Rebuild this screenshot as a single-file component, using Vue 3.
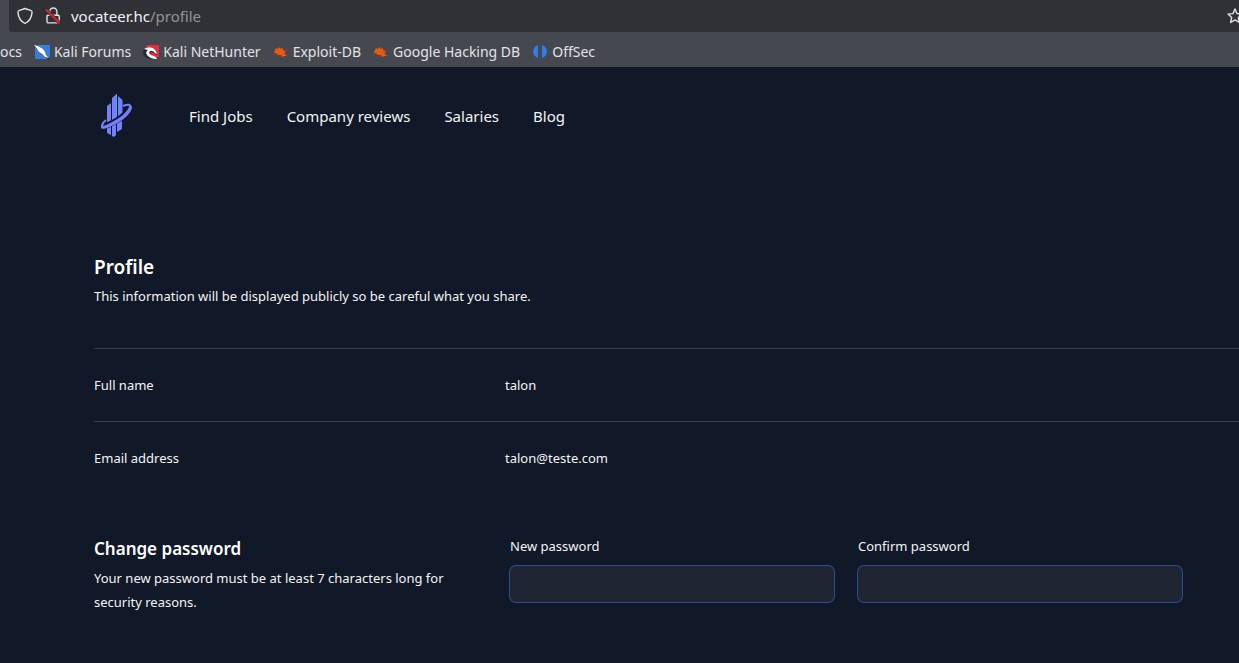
<script setup>
import { ref } from 'vue'

const links = ['Find Jobs', 'Company reviews', 'Salaries', 'Blog']
const bookmarks = [
  { name: 'Kali Forums', icon: 'forums' },
  { name: 'Kali NetHunter', icon: 'nethunter' },
  { name: 'Exploit-DB', icon: 'bug' },
  { name: 'Google Hacking DB', icon: 'bug' },
  { name: 'OffSec', icon: 'offsec' }
]
const details = [
  { label: 'Full name', value: 'talon' },
  { label: 'Email address', value: 'talon@teste.com' }
]
const newPassword = ref('')
const confirmPassword = ref('')
</script>

<template>
  <div class="window">
    <div class="toolbar">
      <div class="address">
        <svg class="shield" viewBox="0 0 16 18" width="16" height="18" fill="none" stroke="#e2e2e6" stroke-width="1.4" stroke-linejoin="round">
          <path d="M8 1.5 L14.2 3.7 Q15.2 4 15 5.6 C14.6 11 12.2 14.3 8 16.5 C3.8 14.3 1.4 11 1 5.6 Q.8 4 1.8 3.7 Z" />
        </svg>
        <svg class="lock" viewBox="0 0 16 18" width="16" height="18" fill="none">
          <path d="M4.7 8V4.6a3.6 3.6 0 0 1 7.2 0V8M3 8.2h10.2q1 0 1 1v5.2q0 1.5-1.5 1.5H3.5Q2 15.9 2 14.4V9.2q0-1 1-1Z" stroke="#e2e2e6" stroke-width="1.4" />
          <path d="M1 2.5 14.500 16" stroke="#303136" stroke-width="3.500" />
          <path d="M1 2.5 14.500 16" stroke="#ee2030" stroke-width="1.800" />
        </svg>
        <span class="url">vocateer.hc<span class="path">/profile</span></span>
      </div>
      <svg class="star" viewBox="0 0 16 16" width="16" height="16" fill="none" stroke="#e2e2e6" stroke-width="1.4" stroke-linejoin="round">
        <path d="M8 1 10 5.600 15 6.100 11.300 9.500 12.400 14.500 8 11.900 3.600 14.500 4.700 9.500 1 6.100 6 5.600Z" />
      </svg>
    </div>

    <nav class="bookmarks" aria-label="Bookmarks">
      <a href="#" class="bookmark">ocs</a>
      <a v-for="b in bookmarks" :key="b.name" href="#" class="bookmark">
        <svg v-if="b.icon === 'forums'" viewBox="0 0 16 16" width="16" height="16">
          <path d="M1 1h15v14H1Z" fill="#367be0" />
          <path d="M0 2 4 7 7 10 11 13 15 16 16 14 12 11 10 7 6 3 2 1Z" fill="#292c33" />
          <path d="M0 1 4 2 9 5 11 8 12 11 15 14 11 13 8 10 5 8 3 5Z" fill="#fff" />
        </svg>
        <svg v-else-if="b.icon === 'nethunter'" viewBox="0 0 16 16" width="16" height="16">
          <path d="M4 1h12v12H10L2 5Z" fill="#ed2940" />
          <path d="M0 8Q1 3 7 3 12 4 14 8L14 11 9 8 7 9 8 12 13 13 15 15H7Q2 14 0 10Z" fill="#292a30" />
          <path d="M1 5Q5 2 10 4 13 6 14 9L13 10Q10 6 7 7 5 9 8 11L13 13 14 15Q7 15 4 11 2 8 5 6Z" fill="#fff" />
        </svg>
        <svg v-else-if="b.icon === 'bug'" viewBox="0 0 16 16" width="16" height="16">
          <path d="M1 7 4 5M0 11 5 9M4 13 7 10M7 3 10 6M11 6 15 7" stroke="#8b3e2c" stroke-width="1" />
          <path d="M2 6 3 4 5 5 6 3 8 5 10 4 10 6 13 8 11 9 14 12 11 12 9 13 8 11 5 11 3 9 1 9Z" fill="#ec5a10" />
        </svg>
        <svg v-else viewBox="0 0 16 16" width="16" height="16" fill="#367be0">
          <path d="M6 1v13Q1 12 1 7.500T6 1ZM10 1v13q5-2 5-6.500t-5-6.500Z" />
          <path d="M7.500 0h1v11h-1ZM7 13h2v3H7Z" fill="#294f8d" />
        </svg>
        <span>{{ b.name }}</span>
      </a>
    </nav>

    <div class="site">
      <header class="header">
        <a href="#" class="brand" aria-label="Vocateer">
          <svg viewBox="0 0 35 44" width="35" height="44">
            <g fill="#7480fb">
              <path d="M9 12 13 9V30H9ZM14 4 18.500 0V28H14ZM20 2 24.500 6V23H20Z" />
              <path d="M9 32 13 30V41L9 39ZM14 31 18 29V41L16 43 14 42ZM19 28 24 25V35L19 38Z" />
            </g>
            <path d="M4 33Q9 32 18 27 27 22 31 15" fill="none" stroke="#111827" stroke-width="6" />
            <path d="M25 12Q33 9 32 13C30 20 21 27 13 31Q3 36 4 32Q4 29 8 26" fill="none" stroke="#7480fb" stroke-width="2" />
            <path d="M30 11Q32 12 31 14Q26 22 14 28Q7 32 4 32L3 34Q8 35 18 30Q32 22 34 14Q34 10 30 11Z" fill="#7480fb" />
            <path d="M18.500 0V23" stroke="#4aa5f5" stroke-width="1" />
          </svg>
        </a>
        <nav class="links" aria-label="Main">
          <a v-for="link in links" :key="link" href="#">{{ link }}</a>
        </nav>
      </header>

      <main class="content">
        <h1>Profile</h1>
        <p>This information will be displayed publicly so be careful what you share.</p>

        <dl class="details">
          <div v-for="d in details" :key="d.label" class="row">
            <dt>{{ d.label }}</dt>
            <dd>{{ d.value }}</dd>
          </div>
        </dl>

        <form class="password" @submit.prevent>
          <div>
            <h2>Change password</h2>
            <p>Your new password must be at least 7 characters long for security reasons.</p>
          </div>
          <div class="fields">
            <div>
              <label for="new-password">New password</label>
              <input id="new-password" v-model="newPassword" type="password" autocomplete="new-password" />
            </div>
            <div>
              <label for="confirm-password">Confirm password</label>
              <input id="confirm-password" v-model="confirmPassword" type="password" autocomplete="new-password" />
            </div>
          </div>
        </form>
      </main>
    </div>
  </div>
</template>

<style>
body {
  background: #111827;
}
</style>

<style scoped>
.window {
  font-family: "Noto Sans", sans-serif;
  color: #f3f4f6;
  background: #45484f;
  overflow: hidden;
}
a {
  color: inherit;
  text-decoration: none;
}
svg {
  display: block;
  flex-shrink: 0;
}
.toolbar {
  display: flex;
  align-items: center;
  height: 32px;
  margin-left: 9px;
  border-radius: 0 0 0 4px;
  background: #303136;
}
.address {
  display: flex;
  flex: 1;
  align-items: center;
  padding-left: 8px;
}
.lock {
  margin-left: 12px;
}
.url {
  margin-left: 10px;
  font-size: 15px;
  line-height: 24px;
  color: #f0f0f4;
}
.path {
  color: #929398;
}
.star {
  margin-right: -4px;
}
.bookmarks {
  display: flex;
  align-items: center;
  gap: 12px;
  height: 31px;
  padding-top: 4px;
  white-space: nowrap;
  font-size: 14px;
  line-height: 20px;
  color: #e2e3e6;
}
.bookmark {
  display: flex;
  align-items: center;
  gap: 4px;
}
.site {
  background: #111827;
}
.header {
  display: flex;
  align-items: center;
  gap: 56px;
  padding: 27px 98px 0;
}
.links {
  display: flex;
  gap: 34px;
  font-size: 15px;
  line-height: 24px;
}
.content {
  padding: 114px 0 48px 94px;
  font-size: 13px;
  line-height: 24px;
}
h1,
h2,
p,
dl,
dd {
  margin: 0;
}
h1,
h2 {
  line-height: 30px;
  font-weight: 600;
  color: #fff;
}
h1 {
  font-size: 19px;
}
h2 {
  font-size: 17px;
}
p {
  padding-top: 2px;
}
.details {
  margin-top: 40px;
}
.row {
  display: grid;
  grid-template-columns: 14fr 25fr;
  padding: 24px 0;
  border-top: 1px solid #374151;
}
.password {
  display: grid;
  grid-template-columns: 4fr 7fr;
  gap: 32px;
  padding: 40px 57px 0 0;
}
.fields {
  display: grid;
  grid-template-columns: 1fr 1fr;
  gap: 24px;
}
label {
  display: block;
}
input {
  display: block;
  box-sizing: border-box;
  width: 100%;
  height: 36px;
  margin-top: 8px;
  padding: 6px 12px;
  border: 0;
  border-radius: 6px;
  outline: none;
  background: #1f2532;
  box-shadow: 0 0 0 1px #294f91;
  color: #fff;
  font: inherit;
}
</style>
